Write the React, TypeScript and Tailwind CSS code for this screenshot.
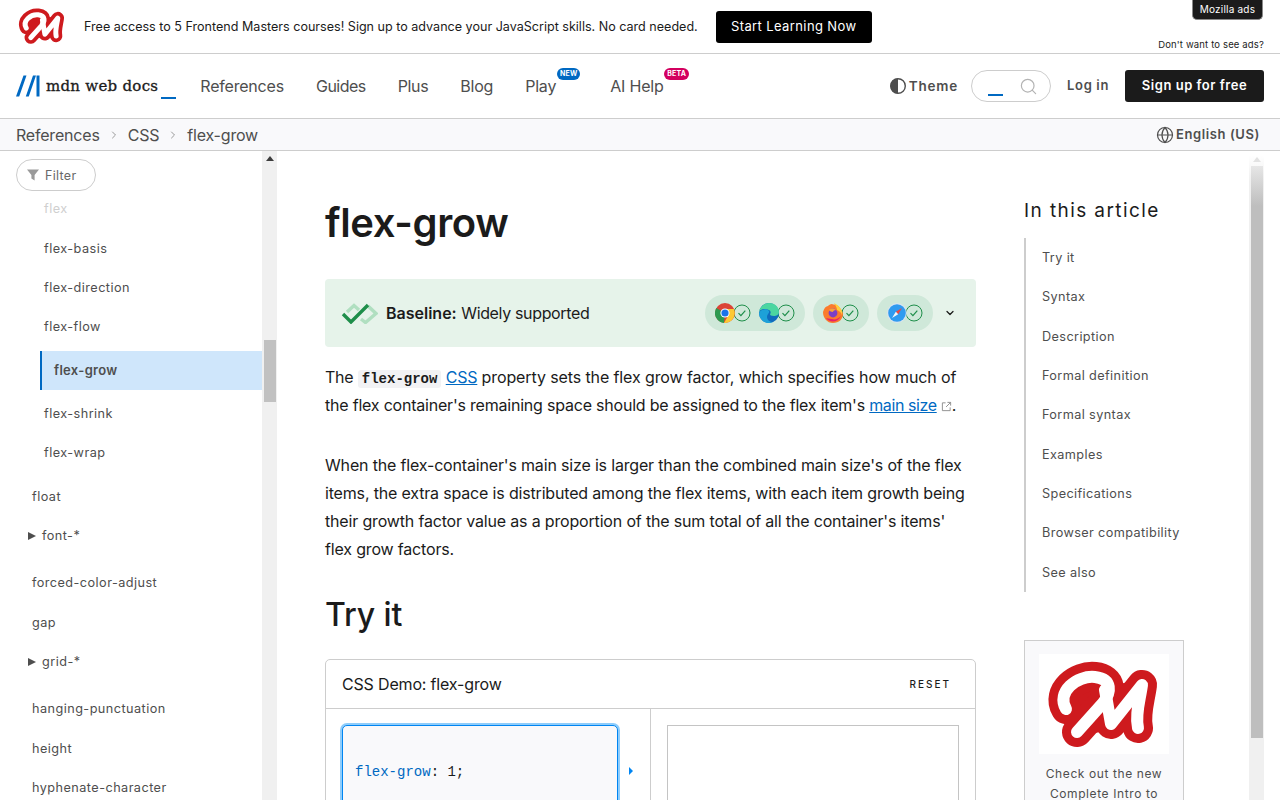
import { ChevronRight, ChevronDown, Search, Globe } from 'lucide-react';

const MastersLogo = ({ className }: { className: string }) => (
  <svg viewBox="0 0 130 100" className={className}>
    <path d="M30 40L100 26L104 70L40 82z" fill="#ce1a1e" />
    <g fill="none" strokeLinecap="round" strokeLinejoin="round">
      <path d="M27 55C17 38 38 21 56 23C74 25 72 39 64 49L38 78" stroke="#ce1a1e" strokeWidth="30" />
      <path d="M66 36L72 70L103 31C101 46 96 60 99 74" stroke="#ce1a1e" strokeWidth="30" />
      <path d="M27 55C17 38 38 21 56 23C74 25 72 39 64 49L38 78" stroke="#fff" strokeWidth="12" />
      <path d="M66 36L72 70L103 31C101 46 96 60 99 74" stroke="#fff" strokeWidth="12" />
    </g>
  </svg>
);

const CheckBadge = () => (
  <svg viewBox="0 0 18 18" className="-ml-[2px] h-[18px] w-[18px] shrink-0">
    <circle cx="9" cy="9" r="8" fill="none" stroke="#1e8e4a" strokeWidth="1" />
    <path d="M5.5 9.2l2.4 2.4 4.4-5" fill="none" stroke="#1e8e4a" strokeWidth="1.2" />
  </svg>
);

const Chrome = () => (
  <svg viewBox="0 0 20 20" className="relative z-10 h-5 w-5 shrink-0">
    <circle cx="10" cy="10" r="10" fill="#db4437" />
    <path d="M10 10L1.3 5A10 10 0 0 0 9 20z" fill="#2d9a50" />
    <path d="M10 6h8.900A10 10 0 0 1 9 20l5-9z" fill="#fcc934" />
    <circle cx="10" cy="10" r="4.600" fill="#fff" />
    <circle cx="10" cy="10" r="3.600" fill="#1a73e8" />
  </svg>
);

const Edge = () => (
  <svg viewBox="0 0 20 20" className="relative z-10 h-5 w-5 shrink-0">
    <circle cx="10" cy="10" r="10" fill="#0f6cbd" />
    <path d="M0 9C1 3 6 0 10 0c6 0 10 4 10 9 0 3-3 4-5 4-3 0-4-1-4-2 1-1 1-3-1-4C6 5 1 6 0 9z" fill="#4bd6a0" />
    <path d="M0 10c2-4 8-5 10-2 1 2-2 3-2 6 0 3 3 5 6 5-1 .5-3 1-4 1C4 20 0 15 0 10z" fill="#1da1d8" />
  </svg>
);

const Firefox = () => (
  <svg viewBox="0 0 20 20" className="relative z-10 h-5 w-5 shrink-0">
    <path d="M0 9C1 5 3 3 5 3c1-1 2-2 4-2 1 1 5 0 7 3 3 3 4 6 4 7 0 5-4 9-10 9S0 15 0 9z" fill="#fb7b2c" />
    <path d="M11 0c6 3 9 8 8 12-1-3-3-4-5-5 0-3-2-5-3-7z" fill="#ffce3b" />
    <path d="M3 15c3 5 12 5 15-2-3 3-6 4-9 3-3 0-5-1-6-1z" fill="#e5226b" />
    <circle cx="10" cy="10" r="4.400" fill="#7b3fc6" />
    <path d="M6 7c2-2 5-2 7 0-2 0-3 1-3 2-2 0-3-1-4-2z" fill="#f6a13a" />
  </svg>
);

const Safari = () => (
  <svg viewBox="0 0 20 20" className="relative z-10 h-5 w-5 shrink-0">
    <circle cx="10" cy="10" r="10" fill="#d9e4ee" />
    <circle cx="10" cy="10" r="8.800" fill="#2f9bf0" />
    <path d="M15 5l-6.200 3.800L11.200 11.200z" fill="#f0483e" />
    <path d="M5 15l3.800-6.200L11.200 11.200z" fill="#f2f6f9" />
  </svg>
);

type SideRow = { label: string; cls: string; kind?: 'caret' | 'active' | 'faded' };

const sideRows: SideRow[] = [
  { label: 'flex', cls: 'mt-[-2px] pl-[44px]', kind: 'faded' },
  { label: 'flex-basis', cls: 'mt-px pl-[44px]' },
  { label: 'flex-direction', cls: 'pl-[44px]' },
  { label: 'flex-flow', cls: 'pl-[44px]' },
  { label: 'flex-grow', cls: 'mt-[5px] ml-[40px]', kind: 'active' },
  { label: 'flex-shrink', cls: 'mt-1 pl-[44px]' },
  { label: 'flex-wrap', cls: 'pl-[44px]' },
  { label: 'float', cls: 'mt-[5px] pl-[32px]' },
  { label: 'font-*', cls: 'pl-[28px]', kind: 'caret' },
  { label: 'forced-color-adjust', cls: 'mt-2 pl-[32px]' },
  { label: 'gap', cls: 'mt-px pl-[32px]' },
  { label: 'grid-*', cls: 'pl-[28px]', kind: 'caret' },
  { label: 'hanging-punctuation', cls: 'mt-2 pl-[32px]' },
  { label: 'height', cls: 'mt-px pl-[32px]' },
  { label: 'hyphenate-character', cls: 'pl-[32px]' },
];

const tocItems = [
  'Try it',
  'Syntax',
  'Description',
  'Formal definition',
  'Formal syntax',
  'Examples',
  'Specifications',
  'Browser compatibility',
  'See also',
];

const Sidebar = () => (
  <aside className="flex w-[277px] shrink-0">
    <div className="w-[262px] shrink-0">
      <div className="pl-4 pt-2">
        <div className="flex h-8 w-20 items-center rounded-full border border-[#cdcdcd] pl-[10px] pt-[2px] text-[12.5px] tracking-[0.025em] text-[#696969]">
          <svg viewBox="0 0 12 12" className="mb-[2px] mr-[6px] h-3 w-3">
            <path d="M0 0.500h12L7.600 6v5.500L4.400 9.600V6z" fill="#9a9a9a" />
          </svg>
          Filter
        </div>
      </div>
      {sideRows.map((row) => {
        if (row.kind === 'active') {
          return (
            <div
              key={row.label}
              className={`flex h-[39px] items-center border-l-2 border-[#0069c2] bg-[#cfe6fb] pl-3 text-[13px] font-semibold tracking-[0.025em] text-[#4e4e4e] ${row.cls}`}
            >
              {row.label}
            </div>
          );
        }
        return (
          <div
            key={row.label}
            className={`flex h-[39px] items-center text-[12.7px] tracking-[0.035em] ${row.kind === 'faded' ? 'text-[#cfcfcf]' : 'text-[#4e4e4e]'} ${row.cls}`}
          >
            {row.kind === 'caret' && (
              <span className="mr-[6px] h-0 w-0 border-y-[4.5px] border-l-[8px] border-y-transparent border-l-[#4e4e4e]" />
            )}
            {row.label}
          </div>
        );
      })}
    </div>
    <div className="flex w-[15px] shrink-0 flex-col items-center bg-[#f0f0f0]">
      <span className="mt-[5px] h-0 w-0 border-x-[4px] border-b-[5px] border-x-transparent border-b-[#3c3c3c]" />
      <div className="mt-[179px] h-[62px] w-[12px] bg-[#c1c1c1]" />
    </div>
  </aside>
);

const Baseline = () => (
  <div className="mt-[28px] flex h-[68px] items-center rounded-[4px] bg-[#e6f3ea] pl-4 text-[#1b1b1b]">
    <svg viewBox="0 0 37 21" className="h-[21px] w-[37px]">
      <g fill="none" strokeWidth="3.400">
        <path d="M6 9l7-6.500 5 4.500M20 16l4.500 3.500L35 10.500 27 3" stroke="#b0dfc0" />
        <path d="M2 11l8 8L27 2" stroke="#1e8e4a" />
      </g>
    </svg>
    <span className="ml-2 text-base">
      <b className="font-semibold">Baseline:</b> <span className="tracking-[-0.35px]">Widely supported</span>
    </span>
    <div className="ml-auto flex items-center gap-2">
      <div className="flex h-9 items-center gap-2 rounded-full bg-[#cfe8d9] px-[10px]">
        <div className="flex items-center"><Chrome /><CheckBadge /></div>
        <div className="flex items-center"><Edge /><CheckBadge /></div>
      </div>
      <div className="flex h-9 items-center rounded-full bg-[#cfe8d9] px-[10px]"><Firefox /><CheckBadge /></div>
      <div className="flex h-9 items-center rounded-full bg-[#cfe8d9] px-[10px]"><Safari /><CheckBadge /></div>
    </div>
    <ChevronDown size={12} strokeWidth={2.5} className="mx-[20px] ml-[11px]" color="#1b1b1b" />
  </div>
);

const Demo = () => (
  <div className="mt-[22px] rounded-t-[5px] border border-[#cdcdcd]">
    <div className="flex h-[49px] items-center justify-between border-b border-[#cdcdcd] pl-4 pr-[24px]">
      <span className="text-base tracking-[-0.17px] text-[#1b1b1b]">CSS Demo: flex-grow</span>
      <span className="text-[10px] font-medium tracking-[0.2em] text-[#1b1b1b]">RESET</span>
    </div>
    <div className="flex h-[200px]">
      <div className="flex w-[325px] border-r border-[#cdcdcd] pl-4 pt-4">
        <div className="h-[160px] w-[276px] rounded-[5px] border border-[#0085f2] bg-[#f9f9fb] pl-3 pt-[36px] font-['Liberation_Mono',monospace] text-sm leading-5 text-[#1b1b1b] shadow-[0_0_0_2px_#8fcdfb]">
          <span className="text-[#0069c2]">flex-grow</span>: 1;
        </div>
        <span className="ml-[11px] mt-[42px] h-0 w-0 border-y-[4px] border-l-[4px] border-y-transparent border-l-[#0085f2]" />
      </div>
      <div className="pl-4 pt-4">
        <div className="h-[160px] w-[292px] border border-[#c4c4c4]" />
      </div>
    </div>
  </div>
);

const Article = () => (
  <article className="w-[651px] shrink-0 pt-[44px] text-base text-[#1b1b1b]">
    <h1 className="text-[40px] font-semibold leading-[56px] tracking-[-0.35px]">flex-grow</h1>
    <Baseline />
    <p className="mt-4 leading-7 tracking-[-0.21px]">
      The{' '}
      <code className="rounded-[3px] bg-[#f2f2f4] px-1 py-px font-['Liberation_Mono',monospace] text-sm font-bold tracking-normal">flex-grow</code>{' '}
      <a className="text-[#0069c2] underline">CSS</a>{' '}
      <span className="tracking-[-0.11px]">property sets the flex grow factor, which specifies how much of</span> the flex
      container's remaining space should be assigned to the flex item's{' '}
      <span className="whitespace-nowrap">
        <a className="tracking-[-0.4px] text-[#0069c2] underline">main size</a>
        <svg viewBox="0 0 12 12" className="ml-[4px] inline h-[11px] w-[11px] align-[-1px]">
          <path d="M5 2H1.500v8.500H10V7M7 1.500h3.500V5M10.500 1.500L5.500 6.500" fill="none" stroke="#8a8a8a" strokeWidth="1" />
        </svg>
        .
      </span>
    </p>
    <p className="mt-[32px] leading-7 tracking-[-0.17px]">
      When the flex-container's main size is larger than the combined main size's of the flex items, the extra space is
      distributed among the flex items, with each item growth being their growth factor value as a proportion of the sum
      total of all the container's items' flex grow factors.
    </p>
    <h2 className="mt-[30px] text-[32px] font-medium leading-[44px] tracking-[-0.1px]">Try it</h2>
    <Demo />
  </article>
);

const RightRail = () => (
  <div className="ml-[48px] w-[160px] shrink-0 pt-[48px]">
    <h2 className="text-[19px] leading-6 tracking-[0.074em] text-[#1b1b1b]">In this article</h2>
    <ul className="mt-[15px] border-l-2 border-[#cdcdcd] pl-4">
      {tocItems.map((item) => (
        <li key={item} className="flex h-[39.3px] items-center whitespace-nowrap text-[12.7px] tracking-[0.03em] text-[#4e4e4e]">
          {item}
        </li>
      ))}
    </ul>
    <div className="mt-[48px] h-[300px] border border-[#cdcdcd] bg-[#f9f9fb] px-[14px] pt-[13px] text-center text-xs leading-5 tracking-[0.05em] text-[#4e4e4e]">
      <div className="h-[100px] w-[130px] bg-white">
        <MastersLogo className="h-[100px] w-[130px]" />
      </div>
      <p className="mt-[10px]">Check out the new Complete Intro to</p>
    </div>
  </div>
);

export default function App() {
  return (
    <div className="flex h-[800px] w-[1280px] flex-col overflow-hidden bg-white font-[Inter,sans-serif]">
      {/* ad banner */}
      <div className="relative flex h-[54px] shrink-0 items-center border-b border-[#cdcdcd] pb-px pl-[15px]">
        <MastersLogo className="h-[42px] w-[54px]" />
        <span className="ml-[15px] mt-[3px] text-[12.57px] text-[#1b1b1b]">
          Free access to 5 Frontend Masters courses! Sign up to advance your JavaScript skills. No card needed.
        </span>
        <button className="ml-[18px] mt-px flex h-8 w-[156px] items-center justify-center rounded-[3px] bg-black text-[13px] tracking-[0.03em] text-white">
          Start Learning Now
        </button>
        <span className="absolute right-[17px] top-0 flex h-[20px] w-[71px] items-center justify-center rounded-b-[5px] border border-t-0 border-[#8a8a8a] bg-[#1b1b1b] text-[10px] tracking-[0.02em] text-white">
          Mozilla ads
        </span>
        <span className="absolute right-[16px] top-[38px] text-[9.5px] tracking-[0.016em] text-[#1b1b1b]">Don't want to see ads?</span>
      </div>

      {/* main nav */}
      <nav className="flex h-[65px] shrink-0 items-center border-b border-[#cdcdcd] pl-4 text-[#4e4e4e]">
        <svg viewBox="0 0 24 22" className="h-[22px] w-[24px] shrink-0">
          <path d="M0 21.500L7.500 0.500h3L3.200 21.500zM9.800 21.500L17 0.500h3l-7.200 21z" fill="#0069c2" />
          <path d="M20.500 0.500H23.500V21.500H20.500z" fill="#0069c2" />
        </svg>
        <span className="ml-[6px] whitespace-nowrap font-['DejaVu_Serif',serif] text-[15px] tracking-[0.27px] text-[#1b1b1b] [-webkit-text-stroke:0.3px_#1b1b1b]">mdn web docs</span>
        <span className="ml-[3px] mt-[24px] h-[2px] w-[15px] shrink-0 bg-[#0069c2]" />
        <div className="ml-[24px] flex items-center gap-[32px] text-base tracking-[-0.2px]">
          <span>References</span>
          <span className="tracking-[-0.5px]">Guides</span>
          <span className="tracking-[-0.4px]">Plus</span>
          <span>Blog</span>
          <span className="relative">
            Play
            <span className="absolute left-[32px] top-[-6px] flex h-[12px] w-[23px] items-center justify-center rounded-full bg-[#0069c2] text-[7px] font-bold tracking-[0.02em] text-white">NEW</span>
          </span>
          <span className="relative ml-[22px]">
            AI Help
            <span className="absolute left-[54px] top-[-6px] flex h-[12px] w-[25px] items-center justify-center rounded-full bg-[#d3005f] text-[7px] font-bold tracking-[0.02em] text-white">BETA</span>
          </span>
        </div>
        <div className="ml-auto flex items-center pr-4">
          <svg viewBox="0 0 16 16" className="h-4 w-4">
            <circle cx="8" cy="8" r="7.300" fill="none" stroke="#4e4e4e" strokeWidth="1.400" />
            <path d="M8 0.500a7.500 7.500 0 0 0 0 15z" fill="#4e4e4e" />
          </svg>
          <span className="ml-[3px] text-[13.5px] font-semibold tracking-[0.06em]">Theme</span>
          <div className="relative ml-[13px] flex h-8 w-20 items-center justify-end rounded-full border border-[#cdcdcd] pr-[12px]">
            <Search size={19} strokeWidth={1.5} color="#b3b3b3" />
            <span className="absolute left-[16px] top-[23px] h-[2px] w-[15px] bg-[#0069c2]" />
          </div>
          <span className="ml-4 text-[13px] font-semibold tracking-[0.05em]">Log in</span>
          <button className="ml-4 flex h-8 w-[139px] items-center justify-center rounded-[3px] bg-[#1b1b1b] text-[13px] font-semibold tracking-[0.04em] text-white">
            Sign up for free
          </button>
        </div>
      </nav>

      {/* breadcrumbs */}
      <div className="flex h-[32px] shrink-0 items-center border-b border-[#cdcdcd] bg-[#f9f9fb] pl-4 pr-[20px] text-base tracking-[-0.2px] text-[#4e4e4e]">
        <span>References</span>
        <ChevronRight size={12} color="#9a9a9a" className="mx-[8px]" />
        <span>CSS</span>
        <ChevronRight size={12} color="#9a9a9a" className="mx-[8px]" />
        <span>flex-grow</span>
        <Globe size={18} strokeWidth={1.6} className="ml-auto" />
        <span className="ml-[2px] text-[13px] font-semibold tracking-[0.045em]">English (US)</span>
      </div>

      <div className="flex min-h-0 flex-1 overflow-hidden">
        <Sidebar />
        <main className="flex flex-1 pl-[48px]">
          <Article />
          <RightRail />
          <div className="ml-[65px] flex h-full w-[15px] shrink-0 flex-col items-center bg-[linear-gradient(#fff_4px,#f0f0f0_30px)]">
            <span className="mt-[6px] h-0 w-0 border-x-[4px] border-b-[5px] border-x-transparent border-b-[#e2e2e2]" />
            <div className="mt-[4px] h-[572px] w-[12px] bg-[linear-gradient(#e6e6e6,#bebebe_40px)]" />
          </div>
        </main>
      </div>
    </div>
  );
}
